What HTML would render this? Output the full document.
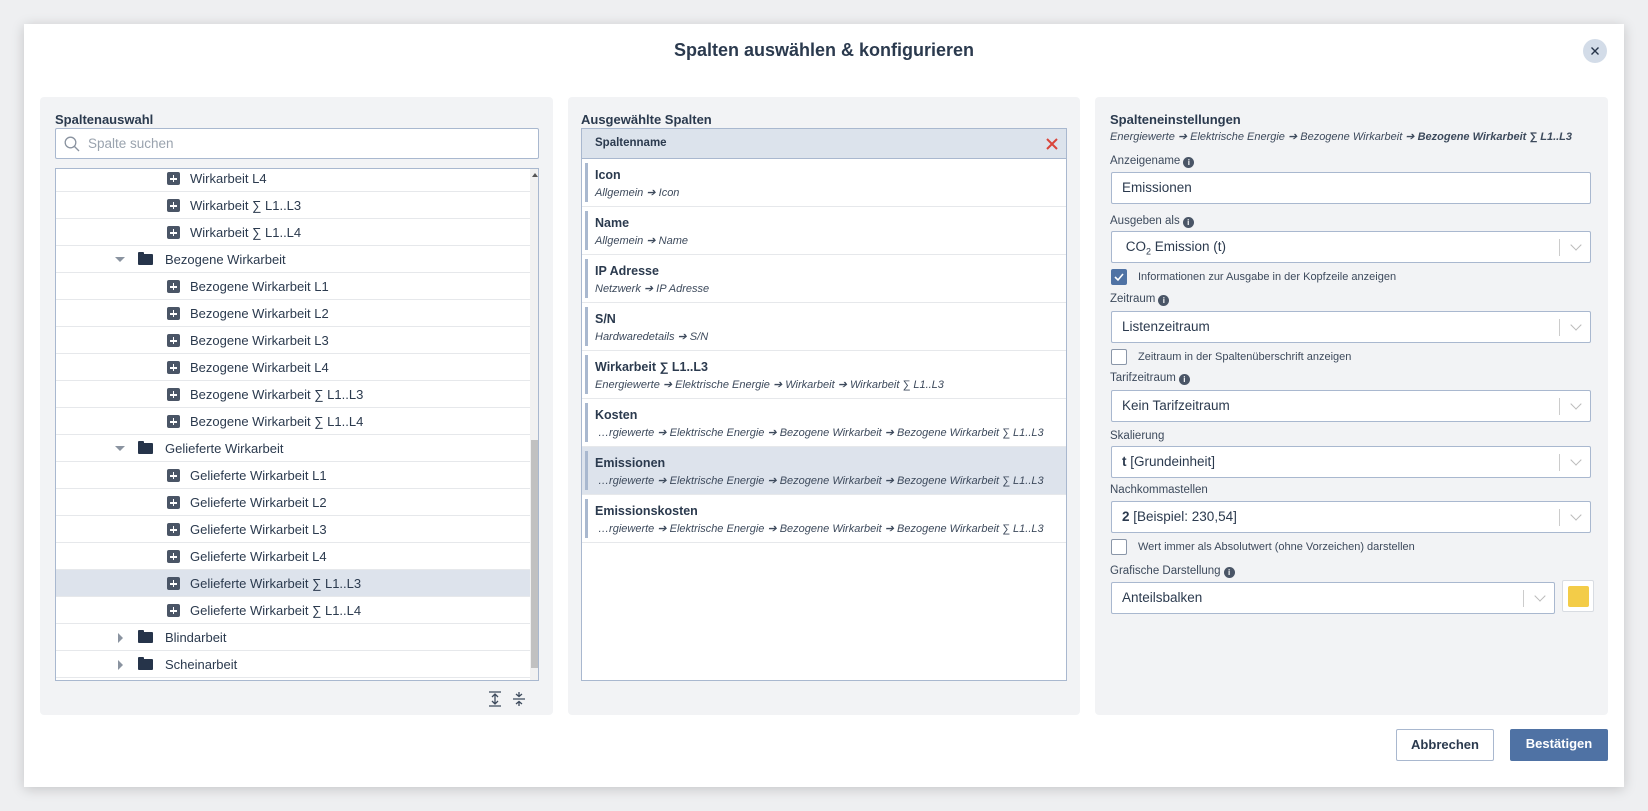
<!DOCTYPE html>
<html><head><meta charset="utf-8"><style>
*{box-sizing:border-box;margin:0;padding:0}
body{width:1648px;height:811px;background:#eeeff1;font-family:"Liberation Sans",sans-serif;color:#2b3a4e;position:relative;overflow:hidden}
.modal{position:absolute;left:24px;top:24px;width:1600px;height:763px;background:#fff;box-shadow:0 2px 12px rgba(0,0,0,.18)}
.title{position:absolute;left:0;right:0;top:16px;text-align:center;font-size:18px;font-weight:bold;color:#2b3a4e}
.close{position:absolute;left:1559px;top:15px;width:24px;height:24px;border-radius:50%;background:#d3dce8}
.panel{position:absolute;top:73px;height:618px;background:#f2f3f5;border-radius:4px}
.h{position:absolute;font-size:13px;font-weight:bold}
.abs{position:absolute}
.tree{position:absolute;left:31px;top:144px;width:484px;height:513px;background:#fff;border:1px solid #a9b8cf;overflow:hidden}
.row{position:absolute;left:0;width:474px;height:27px;border-bottom:1px solid #e6e8eb;font-size:13px;line-height:27px}
.row.sel{background:#dde3ec}
.plus{position:absolute;top:7px;width:13px;height:13px;background:#4a5566;border-radius:2px}
.plus:before{content:"";position:absolute;left:3px;top:6px;width:7px;height:1.6px;background:#fff}
.plus:after{content:"";position:absolute;left:5.7px;top:3px;width:1.6px;height:7px;background:#fff}
.fold{position:absolute;top:8px;width:15px;height:11px;background:#26344a;border-radius:1px}
.fold:before{content:"";position:absolute;left:0;top:-2px;width:6px;height:3px;background:#26344a;border-radius:1px 1px 0 0}
.cd{position:absolute;top:11px;width:0;height:0;border-left:5px solid transparent;border-right:5px solid transparent;border-top:5px solid #8a93a0}
.cr{position:absolute;top:9px;width:0;height:0;border-top:5px solid transparent;border-bottom:5px solid transparent;border-left:5px solid #8a93a0}
.tbl{position:absolute;left:13px;top:31px;width:486px;height:553px;background:#fff;border:1px solid #a9b8cf}
.th{height:30px;background:#dce3ec;border-bottom:1px solid #a9b8cf;font-size:11.5px;font-weight:bold;line-height:29px;padding-left:13px;position:relative}
.it{position:relative;height:48px;border-bottom:1px solid #e6e8eb}
.it.sel{background:#dde3ec}
.it .bar{position:absolute;left:3px;top:4px;bottom:4px;width:3px;background:#a9b8cf}
.it b{position:absolute;left:13px;top:9px;font-size:12.5px}
.it i{position:absolute;left:13px;top:27px;font-size:11px;color:#3d4a5c;white-space:nowrap}
.lbl{position:absolute;left:15px;font-size:11.5px;color:#3d4a5c}
.info{display:inline-block;width:11px;height:11px;border-radius:50%;background:#4a5566;color:#fff;font-size:8px;font-weight:bold;text-align:center;line-height:11px;vertical-align:-1px;margin-left:3px}
.inp{position:absolute;left:16px;width:480px;height:32px;background:#fff;border:1px solid #a9b8cf;border-radius:2px;font-size:13.5px;line-height:30px;padding-left:10px;color:#2b3a4e}
.inp .sep{position:absolute;right:30px;top:7px;width:1px;height:17px;background:#ccc}
.inp .chev{position:absolute;right:10px;top:9px;width:8px;height:8px;border-right:1.5px solid #bbb;border-bottom:1.5px solid #bbb;transform:rotate(45deg)}
.cb{position:absolute;left:16px;width:16px;height:16px;border:1px solid #8a96a8;border-radius:2px;background:#fff}
.cb.on{background:#4f72a4;border-color:#4f72a4}
.cbl{position:absolute;left:43px;font-size:11px;color:#3d4a5c}
.btn{position:absolute;top:705px;height:32px;font-size:13px;font-weight:bold;text-align:center;line-height:30px;border-radius:2px}
</style></head><body>
<div class="modal">
<div class="title">Spalten auswählen &amp; konfigurieren</div>
<div class="close"><svg width="24" height="24" viewBox="0 0 24 24"><path d="M8.5 8.5L15.5 15.5M15.5 8.5L8.5 15.5" stroke="#26344a" stroke-width="1.4"/></svg></div>

<div class="panel" style="left:16px;width:513px">
<div class="h" style="left:15px;top:15px">Spaltenauswahl</div>
<div class="abs" style="left:15px;top:31px;width:484px;height:31px;background:#fff;border:1px solid #a9b8cf;border-radius:2px">
<svg class="abs" style="left:8px;top:7px" width="16" height="16" viewBox="0 0 16 16"><circle cx="6.5" cy="6.5" r="5.3" fill="none" stroke="#8a93a0" stroke-width="1.3"/><path d="M10.5 10.5L15 15" stroke="#8a93a0" stroke-width="1.3"/></svg>
<span class="abs" style="left:32px;top:7px;font-size:13.5px;color:#9aa3ae">Spalte suchen</span></div>
</div>
<div class="tree" style="left:31px;top:144px">
<div class="row" style="top:-4px"><span class="plus" style="left:111px"></span><span class="abs" style="left:134px">Wirkarbeit L4</span></div>
<div class="row" style="top:23px"><span class="plus" style="left:111px"></span><span class="abs" style="left:134px">Wirkarbeit ∑ L1..L3</span></div>
<div class="row" style="top:50px"><span class="plus" style="left:111px"></span><span class="abs" style="left:134px">Wirkarbeit ∑ L1..L4</span></div>
<div class="row" style="top:77px"><span class="cd" style="left:59px"></span><span class="fold" style="left:82px"></span><span class="abs" style="left:109px">Bezogene Wirkarbeit</span></div>
<div class="row" style="top:104px"><span class="plus" style="left:111px"></span><span class="abs" style="left:134px">Bezogene Wirkarbeit L1</span></div>
<div class="row" style="top:131px"><span class="plus" style="left:111px"></span><span class="abs" style="left:134px">Bezogene Wirkarbeit L2</span></div>
<div class="row" style="top:158px"><span class="plus" style="left:111px"></span><span class="abs" style="left:134px">Bezogene Wirkarbeit L3</span></div>
<div class="row" style="top:185px"><span class="plus" style="left:111px"></span><span class="abs" style="left:134px">Bezogene Wirkarbeit L4</span></div>
<div class="row" style="top:212px"><span class="plus" style="left:111px"></span><span class="abs" style="left:134px">Bezogene Wirkarbeit ∑ L1..L3</span></div>
<div class="row" style="top:239px"><span class="plus" style="left:111px"></span><span class="abs" style="left:134px">Bezogene Wirkarbeit ∑ L1..L4</span></div>
<div class="row" style="top:266px"><span class="cd" style="left:59px"></span><span class="fold" style="left:82px"></span><span class="abs" style="left:109px">Gelieferte Wirkarbeit</span></div>
<div class="row" style="top:293px"><span class="plus" style="left:111px"></span><span class="abs" style="left:134px">Gelieferte Wirkarbeit L1</span></div>
<div class="row" style="top:320px"><span class="plus" style="left:111px"></span><span class="abs" style="left:134px">Gelieferte Wirkarbeit L2</span></div>
<div class="row" style="top:347px"><span class="plus" style="left:111px"></span><span class="abs" style="left:134px">Gelieferte Wirkarbeit L3</span></div>
<div class="row" style="top:374px"><span class="plus" style="left:111px"></span><span class="abs" style="left:134px">Gelieferte Wirkarbeit L4</span></div>
<div class="row sel" style="top:401px"><span class="plus" style="left:111px"></span><span class="abs" style="left:134px">Gelieferte Wirkarbeit ∑ L1..L3</span></div>
<div class="row" style="top:428px"><span class="plus" style="left:111px"></span><span class="abs" style="left:134px">Gelieferte Wirkarbeit ∑ L1..L4</span></div>
<div class="row" style="top:455px"><span class="cr" style="left:62px"></span><span class="fold" style="left:82px"></span><span class="abs" style="left:109px">Blindarbeit</span></div>
<div class="row" style="top:482px"><span class="cr" style="left:62px"></span><span class="fold" style="left:82px"></span><span class="abs" style="left:109px">Scheinarbeit</span></div>
<div class="abs" style="left:474px;top:0;width:10px;height:513px;background:#f1f1f1"></div>
<div class="abs" style="left:475px;top:271px;width:8px;height:228px;background:#c1c1c1"></div>
<div class="abs" style="left:476px;top:4px;border-left:3px solid transparent;border-right:3px solid transparent;border-bottom:4px solid #555"></div>
</div>
<svg class="abs" style="left:464px;top:667px" width="60" height="16" viewBox="0 0 60 16"><g stroke="#3d4a5c" stroke-width="1.3" fill="none"><path d="M1 1H13M1 15H13M7 3V13M4 6L7 3L10 6M4 10L7 13L10 10"/><path d="M25 8H37M31 1V5M28 3L31 5.5L34 3M31 15V11M28 13L31 10.5L34 13"/></g></svg>

<div class="panel" style="left:544px;width:512px">
<div class="h" style="left:13px;top:15px">Ausgewählte Spalten</div>
<div class="tbl">
<div class="th">Spaltenname<svg class="abs" style="right:8px;top:9px" width="12" height="12" viewBox="0 0 12 12"><path d="M1 1L11 11M11 1L1 11" stroke="#d9453a" stroke-width="2"/></svg></div>
<div class="it"><span class="bar"></span><b>Icon</b><i>Allgemein ➔ Icon</i></div>
<div class="it"><span class="bar"></span><b>Name</b><i>Allgemein ➔ Name</i></div>
<div class="it"><span class="bar"></span><b>IP Adresse</b><i>Netzwerk ➔ IP Adresse</i></div>
<div class="it"><span class="bar"></span><b>S/N</b><i>Hardwaredetails ➔ S/N</i></div>
<div class="it"><span class="bar"></span><b>Wirkarbeit ∑ L1..L3</b><i>Energiewerte ➔ Elektrische Energie ➔ Wirkarbeit ➔ Wirkarbeit ∑ L1..L3</i></div>
<div class="it"><span class="bar"></span><b>Kosten</b><i>&nbsp;…rgiewerte ➔ Elektrische Energie ➔ Bezogene Wirkarbeit ➔ Bezogene Wirkarbeit ∑ L1..L3</i></div>
<div class="it sel"><span class="bar"></span><b>Emissionen</b><i>&nbsp;…rgiewerte ➔ Elektrische Energie ➔ Bezogene Wirkarbeit ➔ Bezogene Wirkarbeit ∑ L1..L3</i></div>
<div class="it"><span class="bar"></span><b>Emissionskosten</b><i>&nbsp;…rgiewerte ➔ Elektrische Energie ➔ Bezogene Wirkarbeit ➔ Bezogene Wirkarbeit ∑ L1..L3</i></div>
</div>
</div>

<div class="panel" style="left:1071px;width:513px">
<div class="h" style="left:15px;top:15px">Spalteneinstellungen</div>
<div class="abs" style="left:15px;top:33px;font-size:11px;font-style:italic;color:#3d4a5c;white-space:nowrap">Energiewerte ➔ Elektrische Energie ➔ Bezogene Wirkarbeit ➔ <b>Bezogene Wirkarbeit ∑ L1..L3</b></div>
<div class="lbl" style="top:58px">Anzeigename<span class="info">i</span></div>
<div class="inp" style="top:75px">Emissionen</div>
<div class="lbl" style="top:118px">Ausgeben als<span class="info">i</span></div>
<div class="inp" style="top:134px">&nbsp;CO<sub style="font-size:9px">2</sub> Emission (t)<span class="sep"></span><span class="chev"></span></div>
<div class="cb on" style="top:172px"><svg width="14" height="14" viewBox="0 0 14 14"><path d="M3 7L6 10L11 4" stroke="#fff" stroke-width="1.6" fill="none"/></svg></div>
<div class="cbl" style="top:174px">Informationen zur Ausgabe in der Kopfzeile anzeigen</div>
<div class="lbl" style="top:196px">Zeitraum<span class="info">i</span></div>
<div class="inp" style="top:214px">Listenzeitraum<span class="sep"></span><span class="chev"></span></div>
<div class="cb" style="top:252px"></div>
<div class="cbl" style="top:254px">Zeitraum in der Spaltenüberschrift anzeigen</div>
<div class="lbl" style="top:275px">Tarifzeitraum<span class="info">i</span></div>
<div class="inp" style="top:293px">Kein Tarifzeitraum<span class="sep"></span><span class="chev"></span></div>
<div class="lbl" style="top:333px">Skalierung</div>
<div class="inp" style="top:349px"><b>t</b> [Grundeinheit]<span class="sep"></span><span class="chev"></span></div>
<div class="lbl" style="top:387px">Nachkommastellen</div>
<div class="inp" style="top:404px"><b>2</b> [Beispiel: 230,54]<span class="sep"></span><span class="chev"></span></div>
<div class="cb" style="top:442px"></div>
<div class="cbl" style="top:444px">Wert immer als Absolutwert (ohne Vorzeichen) darstellen</div>
<div class="lbl" style="top:468px">Grafische Darstellung<span class="info">i</span></div>
<div class="inp" style="top:485px;width:444px">Anteilsbalken<span class="sep"></span><span class="chev"></span></div>
<div class="abs" style="left:467px;top:483px;width:32px;height:32px;background:#fff;border:1px solid #d8dce2;border-radius:2px"><div style="margin:5px;width:21px;height:21px;background:#f3cc48;border-radius:2px"></div></div>
</div>

<div class="btn" style="left:1372px;width:98px;background:#fff;border:1px solid #a9b8cf">Abbrechen</div>
<div class="btn" style="left:1486px;width:98px;background:#4f72a4;color:#fff">Bestätigen</div>
</div>
</body></html>
